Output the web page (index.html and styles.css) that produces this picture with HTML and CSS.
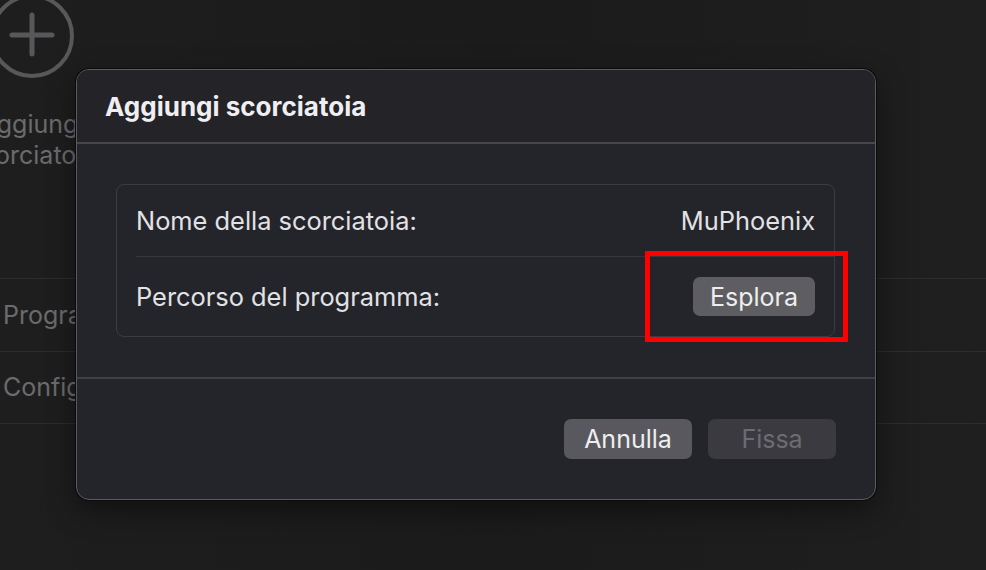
FILE: index.html
```html
<!DOCTYPE html>
<html lang="it">
<head>
<meta charset="utf-8">
<title>Aggiungi scorciatoia</title>
<link rel="stylesheet" href="styles.css">
</head>
<body>
<div class="backdrop">
  <div class="tile">
    <svg class="tile-icon" width="90" height="90" viewBox="0 0 90 90">
      <circle cx="45" cy="45" r="40" fill="none" stroke="#58585b" stroke-width="4"/>
      <path d="M45 24 V63 M25 44 H65" stroke="#58585b" stroke-width="5" stroke-linecap="round" fill="none"/>
    </svg>
    <div class="tile-label">Aggiungi<br>scorciatoia</div>
  </div>
  <div class="list">
    <div class="list-row">Programmi</div>
    <div class="list-row">Configurazione</div>
  </div>
</div>

<div class="dialog">
  <div class="dialog-header">Aggiungi scorciatoia</div>
  <div class="dialog-body">
    <div class="group">
      <div class="group-row row-name">
        <span class="label">Nome della scorciatoia:</span>
        <span class="value">MuPhoenix</span>
      </div>
      <div class="group-row row-path">
        <span class="label">Percorso del programma:</span>
        <button class="btn btn-secondary">Esplora</button>
      </div>
    </div>
  </div>
  <div class="dialog-footer">
    <button class="btn btn-action">Annulla</button>
    <button class="btn btn-disabled">Fissa</button>
  </div>
  <div class="highlight"></div>
</div>
</body>
</html>
```
FILE: styles.css
```css
* { box-sizing: border-box; }
html, body { margin: 0; padding: 0; }
body {
  width: 986px;
  height: 570px;
  overflow: hidden;
  position: relative;
  background: linear-gradient(90deg, #1f1e1f 0%, #1c1b1c 50%, #1f1f20 100%);
  font-family: Inter, "Noto Sans", "Liberation Sans", sans-serif;
  color: #e6e6e8;
}

.backdrop {
  position: relative;
}
.tile {
  width: 90px;
  margin-left: -13px;
  margin-top: -9px;
  display: flex;
  flex-direction: column;
  align-items: center;
}
.tile-icon { display: block; flex: none; }
.tile-label {
  margin-top: 28px;
  width: 160px;
  flex: none;
  text-align: center;
  font-size: 25px;
  line-height: 31px;
  color: #6b6b6d;
}
.list {
  margin-top: 107px;
  border-top: 1px solid #2c2b2d;
}
.list-row {
  height: 72.5px;
  display: flex;
  align-items: center;
  padding-left: 3px;
  font-size: 25px;
  color: #6b6b6d;
  border-bottom: 1px solid #2c2b2d;
}

.dialog {
  position: absolute;
  left: 76px;
  top: 69px;
  width: 800px;
  height: 431px;
  border: 1px solid #5b5b60;
  border-radius: 13px;
  box-shadow: 0 0 0 1px #0b0b0c, 0 10px 30px rgba(0,0,0,0.45);
  background: #24242b;
  display: flex;
  flex-direction: column;
  overflow: visible;
}
.dialog-header {
  height: 74px;
  padding-left: 28px;
  display: flex;
  align-items: center;
  font-size: 26px;
  font-weight: 700;
  color: #efeff1;
  background: #232328;
  border-radius: 12px 12px 0 0;
  border-bottom: 2px solid #46464c;
}
.dialog-body {
  padding: 40px 40px 40px 39px;
  border-bottom: 2px solid #3f3f45;
}
.group {
  border: 1px solid #3b3b41;
  border-radius: 8px;
  padding-left: 19px;
}
.group-row {
  display: flex;
  align-items: center;
  justify-content: space-between;
  padding-right: 19px;
  font-size: 25.4px;
  color: #e2e2e4;
}
.row-name {
  height: 72px;
  border-bottom: 1px solid #36363c;
}
.row-path {
  height: 79px;
}
.value { color: #e2e2e4; }

.btn {
  font-family: inherit;
  font-size: 25px;
  border: none;
  border-radius: 7px;
  height: 40px;
  padding: 0;
}
.btn-secondary {
  width: 122px;
  height: 39px;
  background: #5d5d62;
  color: #eeeeef;
}
.dialog-footer {
  flex: 1;
  display: flex;
  justify-content: flex-end;
  align-items: flex-start;
  gap: 16px;
  padding: 40px 39px 0 0;
}
.btn-action {
  width: 128px;
  background: #58585e;
  color: #eeeeef;
}
.btn-disabled {
  width: 128px;
  background: #3a3a40;
  color: #6c6c71;
}

.highlight {
  position: absolute;
  left: 568px;
  top: 181px;
  width: 203px;
  height: 91px;
  border: 5px solid #ff0000;
}
```
